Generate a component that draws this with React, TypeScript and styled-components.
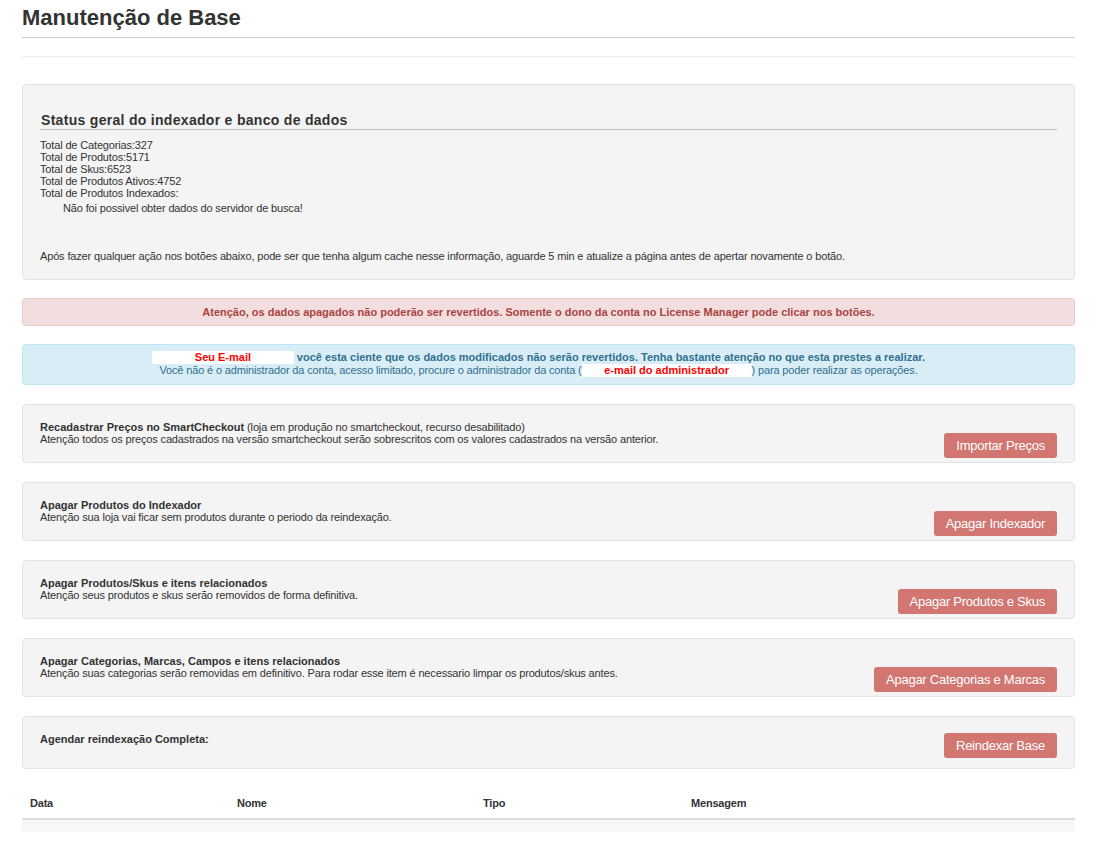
import React from "react";
import styled, { createGlobalStyle } from "styled-components";

const Global = createGlobalStyle`
  html, body { margin: 0; padding: 0; background: #fff; }
  body { font-family: "Liberation Sans", Arial, sans-serif; color: #333; font-size: 11px; }
`;

const Page = styled.div`
  width: 1053px;
  margin-left: 22px;
`;

const Title = styled.h1`
  margin: 0;
  padding: 6px 0 7px;
  font-size: 22px;
  line-height: 24px;
  font-weight: bold;
  color: #333;
  border-bottom: 1px solid #ccc;
`;

const Spacer = styled.div`
  height: 18px;
  border-bottom: 1px solid #eee;
  margin-bottom: 27px;
`;

const Well = styled.div`
  background: #f4f4f4;
  border: 1px solid #e3e3e3;
  border-radius: 4px;
  padding: 27px 17px 17px;
`;

const WellHeading = styled.h3`
  margin: 0 0 9px;
  padding-left: 1px;
  font-size: 14px;
  line-height: 17px;
  letter-spacing: 0.3px;
  font-weight: bold;
  color: #333;
  border-bottom: 1px solid #bbb;
`;

const Line = styled.div<{ $indent?: number; $mt?: number }>`
  font-size: 11px;
  line-height: 12px;
  letter-spacing: -0.15px;
  padding-left: ${(p) => p.$indent ?? 0}px;
  margin-top: ${(p) => p.$mt ?? 0}px;
`;

const Alert = styled.div<{ $kind: "danger" | "info" }>`
  margin-top: 18px;
  border: 1px solid ${(p) => (p.$kind === "danger" ? "#ebccd1" : "#bce8f1")};
  background: ${(p) => (p.$kind === "danger" ? "#f2dede" : "#d9edf7")};
  color: ${(p) => (p.$kind === "danger" ? "#a94442" : "#31708f")};
  border-radius: 4px;
  padding: ${(p) => (p.$kind === "danger" ? "7px 35px 7px 15px" : "6px 35px 7px 15px")};
  text-align: center;
  font-size: 11px;
  letter-spacing: -0.15px;
  line-height: ${(p) => (p.$kind === "danger" ? "12px" : "13px")};
`;

const Strong = styled.span`
  font-weight: bold;
  letter-spacing: 0;
`;

const Field = styled.span<{ $w: number }>`
  display: inline-block;
  width: ${(p) => p.$w}px;
  background: #fff;
  color: #f00;
  font-weight: bold;
  font-size: 11px;
  line-height: 13px;
  letter-spacing: 0;
  text-align: center;
  vertical-align: top;
`;

const Cards = styled.div`
  margin-top: 19px;
  display: flex;
  flex-direction: column;
  gap: 19px;
`;

const Card = styled.div<{ $pb: number }>`
  background: #f4f4f4;
  border: 1px solid #e3e3e3;
  border-radius: 4px;
  padding: 16px 17px ${(p) => p.$pb}px;
  display: flex;
  justify-content: space-between;
  align-items: flex-start;
`;

const CardText = styled.div`
  font-size: 11px;
  line-height: 12px;
  letter-spacing: -0.15px;
`;

const Button = styled.button<{ $mt: number }>`
  margin-top: ${(p) => p.$mt}px;
  height: 25px;
  padding: 0 12px;
  border: none;
  border-radius: 3px;
  background: #d17671;
  color: #fff;
  font-family: "Liberation Sans", Arial, sans-serif;
  font-size: 13px;
  letter-spacing: -0.25px;
  line-height: 25px;
  white-space: nowrap;
  cursor: not-allowed;
`;

const Table = styled.table`
  margin-top: 19px;
  width: 1053px;
  border-collapse: collapse;
  table-layout: fixed;
`;

const Th = styled.th<{ $w?: number }>`
  ${(p) => (p.$w ? `width: ${p.$w}px;` : "")}
  text-align: left;
  padding: 8px;
  font-size: 11px;
  line-height: 14px;
  letter-spacing: -0.2px;
  font-weight: bold;
  border-bottom: 2px solid #ddd;
`;

const EmptyRow = styled.tr`
  height: 13px;
  background: #f7f7f7;
`;

const actions = [
  {
    title: "Recadastrar Preços no SmartCheckout",
    extra: " (loja em produção no smartcheckout, recurso desabilitado)",
    desc: "Atenção todos os preços cadastrados na versão smartcheckout serão sobrescritos com os valores cadastrados na versão anterior.",
    button: "Importar Preços",
  },
  {
    title: "Apagar Produtos do Indexador",
    desc: "Atenção sua loja vai ficar sem produtos durante o periodo da reindexação.",
    button: "Apagar Indexador",
  },
  {
    title: "Apagar Produtos/Skus e itens relacionados",
    desc: "Atenção seus produtos e skus serão removidos de forma definitiva.",
    button: "Apagar Produtos e Skus",
  },
  {
    title: "Apagar Categorias, Marcas, Campos e itens relacionados",
    desc: "Atenção suas categorias serão removidas em definitivo. Para rodar esse item é necessario limpar os produtos/skus antes.",
    button: "Apagar Categorias e Marcas",
  },
];

export default function App() {
  return (
    <>
      <Global />
      <Page>
        <Title>Manutenção de Base</Title>
        <Spacer />
        <Well>
          <WellHeading>Status geral do indexador e banco de dados</WellHeading>
          <Line>Total de Categorias:327</Line>
          <Line>Total de Produtos:5171</Line>
          <Line>Total de Skus:6523</Line>
          <Line>Total de Produtos Ativos:4752</Line>
          <Line>Total de Produtos Indexados:</Line>
          <Line $indent={23} $mt={3}>Não foi possivel obter dados do servidor de busca!</Line>
          <Line $mt={36}>
            Após fazer qualquer ação nos botões abaixo, pode ser que tenha algum cache nesse informação, aguarde 5 min e atualize a página antes de apertar novamente o botão.
          </Line>
        </Well>
        <Alert $kind="danger">
          <Strong>
            Atenção, os dados apagados não poderão ser revertidos. Somente o dono da conta no License Manager pode clicar nos botões.
          </Strong>
        </Alert>
        <Alert $kind="info">
          <div>
            <Field $w={142}>Seu E-mail</Field>{" "}
            <Strong>você esta ciente que os dados modificados não serão revertidos. Tenha bastante atenção no que esta prestes a realizar.</Strong>
          </div>
          <div>
            Você não é o administrador da conta, acesso limitado, procure o administrador da conta (
            <Field $w={170}>e-mail do administrador</Field>) para poder realizar as operações.
          </div>
        </Alert>
        <Cards>
          {actions.map((a) => (
            <Card key={a.button} $pb={4}>
              <CardText>
                <Strong>{a.title}</Strong>
                {a.extra}
                <br />
                {a.desc}
              </CardText>
              <Button $mt={12} disabled>
                {a.button}
              </Button>
            </Card>
          ))}
          <Card $pb={10}>
            <CardText>
              <Strong>Agendar reindexação Completa:</Strong>
            </CardText>
            <Button $mt={0} disabled>
              Reindexar Base
            </Button>
          </Card>
        </Cards>
        <Table>
          <thead>
            <tr>
              <Th $w={191}>Data</Th>
              <Th $w={230}>Nome</Th>
              <Th $w={192}>Tipo</Th>
              <Th>Mensagem</Th>
            </tr>
          </thead>
          <tbody>
            <EmptyRow>
              <td colSpan={4} />
            </EmptyRow>
          </tbody>
        </Table>
      </Page>
    </>
  );
}
